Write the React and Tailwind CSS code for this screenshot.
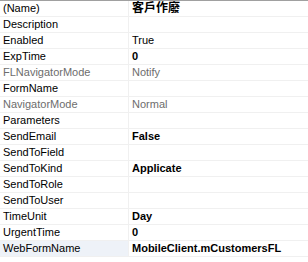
const rows = [
  { name: "(Name)", value: "客戶作廢", bold: true },
  { name: "Description", value: "" },
  { name: "Enabled", value: "True" },
  { name: "ExpTime", value: "0", bold: true },
  { name: "FLNavigatorMode", value: "Notify", gray: true },
  { name: "FormName", value: "" },
  { name: "NavigatorMode", value: "Normal", gray: true },
  { name: "Parameters", value: "" },
  { name: "SendEmail", value: "False", bold: true },
  { name: "SendToField", value: "" },
  { name: "SendToKind", value: "Applicate", bold: true },
  { name: "SendToRole", value: "" },
  { name: "SendToUser", value: "" },
  { name: "TimeUnit", value: "Day", bold: true },
  { name: "UrgentTime", value: "0", bold: true },
  { name: "WebFormName", value: "MobileClient.mCustomersFL", bold: true, selected: true },
];

function App() {
  return (
    <div
      className="w-[308px] h-[262px] bg-white border-t border-[#a0a0a0] overflow-hidden text-[11px] leading-[15px] text-black"
      style={{ fontFamily: '"Liberation Sans", "Noto Sans CJK TC", sans-serif' }}
    >
      {rows.map((r) => (
        <div key={r.name} className="flex h-[16px] border-b border-[#f0f0f0]">
          <div
            className={
              "w-[129px] shrink-0 pl-[3px] border-r border-[#f0f0f0] whitespace-nowrap overflow-hidden " +
              (r.gray ? "text-[#6d6d6d] " : "") +
              (r.selected ? "bg-[#eef2f8]" : "")
            }
          >
            {r.name}
          </div>
          <div
            className={
              "flex-1 pl-[3px] whitespace-nowrap overflow-hidden " +
              (r.bold ? "font-bold " : "") +
              (r.gray ? "text-[#6d6d6d]" : "")
            }
          >
            {r.name === "(Name)" ? <span className="text-[12px]">{r.value}</span> : r.value}
          </div>
        </div>
      ))}
    </div>
  );
}

export default App;
